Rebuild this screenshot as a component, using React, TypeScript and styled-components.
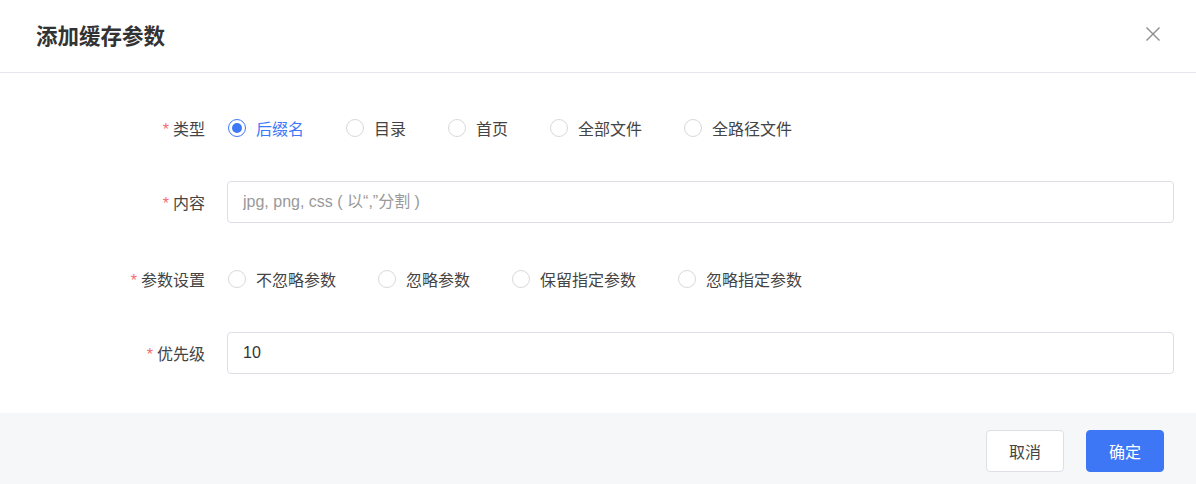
import { useState } from "react";
import styled, { createGlobalStyle } from "styled-components";

const GlobalStyle = createGlobalStyle`
  html, body { margin: 0; padding: 0; background: #fff; }
  body {
    font-family: "Liberation Sans", "Noto Sans CJK SC", sans-serif;
    color: #333;
  }
  * { box-sizing: border-box; }
`;

const typeOptions = ["后缀名", "目录", "首页", "全部文件", "全路径文件"];
const paramOptions = ["不忽略参数", "忽略参数", "保留指定参数", "忽略指定参数"];

const App = () => {
  const [type, setType] = useState("后缀名");
  const [param, setParam] = useState("");
  const [priority, setPriority] = useState("10");

  return (
    <Dialog>
      <GlobalStyle />
      <Header>
        <Title>添加缓存参数</Title>
        <Close aria-label="close">
          <svg width="16" height="16" viewBox="0 0 16 16">
            <path d="M1.5 1.5 L14.5 14.5 M14.5 1.5 L1.5 14.5" stroke="#8c8c8c" strokeWidth="1.4" fill="none" />
          </svg>
        </Close>
      </Header>
      <Body>
        <Row $mb={32}>
          <Label>类型</Label>
          <RadioGroup>
            {typeOptions.map((o) => (
              <RadioItem key={o} onClick={() => setType(o)}>
                <Circle $on={type === o} />
                <RadioText $on={type === o}>{o}</RadioText>
              </RadioItem>
            ))}
          </RadioGroup>
        </Row>
        <Row $mb={35}>
          <Label>内容</Label>
          <Input placeholder="jpg, png, css ( 以“,”分割 )" />
        </Row>
        <Row $mb={32}>
          <Label>参数设置</Label>
          <RadioGroup>
            {paramOptions.map((o) => (
              <RadioItem key={o} onClick={() => setParam(o)}>
                <Circle $on={param === o} />
                <RadioText $on={param === o}>{o}</RadioText>
              </RadioItem>
            ))}
          </RadioGroup>
        </Row>
        <Row $mb={0}>
          <Label>优先级</Label>
          <Input value={priority} onChange={(e) => setPriority(e.target.value)} />
        </Row>
      </Body>
      <Footer>
        <Button>取消</Button>
        <Button $primary>确定</Button>
      </Footer>
    </Dialog>
  );
};

export default App;

const Dialog = styled.div`
  width: 1196px;
  height: 484px;
  display: flex;
  flex-direction: column;
  background: #fff;
  overflow: hidden;
`;

const Header = styled.div`
  height: 73px;
  flex-shrink: 0;
  display: flex;
  align-items: center;
  justify-content: space-between;
  padding: 0 35px 4px 36px;
  border-bottom: 1px solid #e6e6ee;
`;

const Title = styled.div`
  font-size: 21.5px;
  font-weight: 700;
  color: #333;
`;

const Close = styled.div`
  width: 16px;
  height: 16px;
  display: flex;
  cursor: pointer;
`;

const Body = styled.div`
  padding: 34px 22px 39px 0;
`;

const Row = styled.div<{ $mb: number }>`
  display: flex;
  align-items: center;
  height: 42px;
  margin-bottom: ${(p) => p.$mb}px;
`;

const Label = styled.div`
  width: 205px;
  flex-shrink: 0;
  margin-right: 22px;
  text-align: right;
  font-size: 16px;
  color: #444;

  &::before {
    content: "*";
    color: #f56c6c;
    margin-right: 4px;
  }
`;

const RadioGroup = styled.div`
  display: flex;
  align-items: center;
  gap: 41px;
`;

const RadioItem = styled.label`
  display: flex;
  align-items: center;
  cursor: pointer;
`;

const Circle = styled.span<{ $on: boolean }>`
  width: 18px;
  height: 18px;
  border-radius: 50%;
  margin-left: 1px;
  border: 1px solid ${(p) => (p.$on ? "#3d79f6" : "#d9d9d9")};
  background: #fff;
  display: flex;
  align-items: center;
  justify-content: center;

  &::after {
    content: "";
    width: 10px;
    height: 10px;
    border-radius: 50%;
    background: ${(p) => (p.$on ? "#3d79f6" : "transparent")};
  }
`;

const RadioText = styled.span<{ $on: boolean }>`
  margin-left: 10px;
  font-size: 16px;
  color: ${(p) => (p.$on ? "#3d79f6" : "#444")};
`;

const Input = styled.input`
  flex: 1;
  height: 42px;
  border: 1px solid #dcdfe6;
  border-radius: 4px;
  padding: 0 15px;
  font-size: 16px;
  font-family: "Liberation Sans", "Noto Sans CJK SC", sans-serif;
  color: #333;
  outline: none;

  &::placeholder {
    color: #999;
  }
`;

const Footer = styled.div`
  flex: 1;
  background: #f6f7f9;
  display: flex;
  justify-content: flex-end;
  align-items: flex-start;
  gap: 22px;
  padding: 17px 32px 0 0;
`;

const Button = styled.button<{ $primary?: boolean }>`
  width: 78px;
  height: 42px;
  border-radius: 4px;
  font-size: 16px;
  font-family: "Liberation Sans", "Noto Sans CJK SC", sans-serif;
  cursor: pointer;
  border: 1px solid ${(p) => (p.$primary ? "#3e77f6" : "#dcdfe6")};
  background: ${(p) => (p.$primary ? "#3e77f6" : "#fff")};
  color: ${(p) => (p.$primary ? "#fff" : "#444")};
`;
